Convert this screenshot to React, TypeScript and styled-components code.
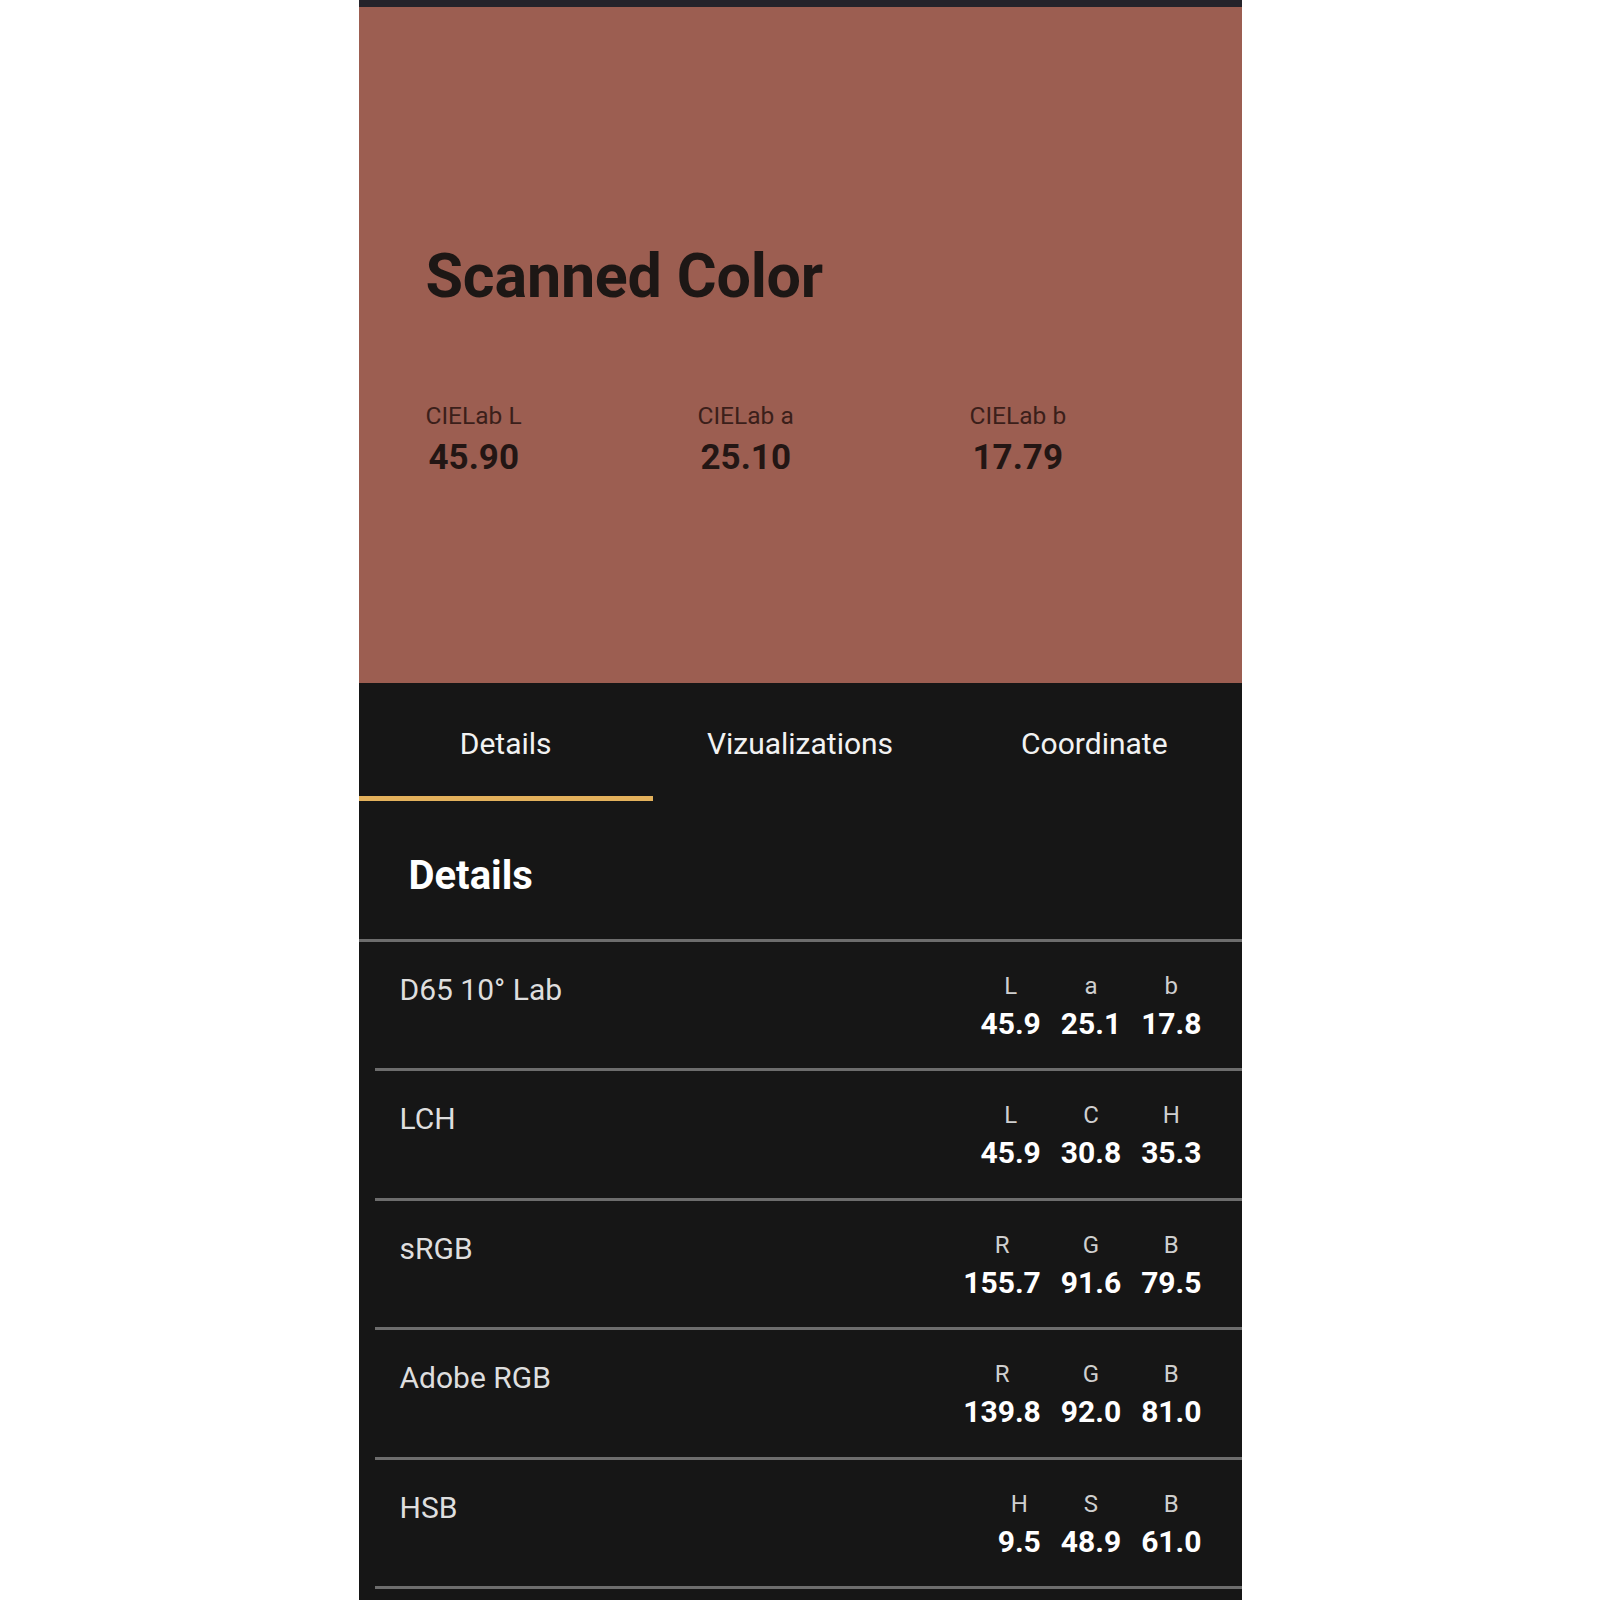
import React from "react";
import styled, { createGlobalStyle } from "styled-components";

const GlobalStyle = createGlobalStyle`
  html, body {
    margin: 0;
    padding: 0;
    background: #ffffff;
  }
  body {
    font-family: Roboto, "Noto Sans", "Liberation Sans", sans-serif;
  }
  * { box-sizing: border-box; }
`;

const Phone = styled.div`
  width: 883px;
  min-height: 1600px;
  margin: 0 auto;
  background: #161616;
  display: flex;
  flex-direction: column;
`;

const StatusBar = styled.div`
  height: 7px;
  background: #25232a;
`;

const Hero = styled.section`
  height: 676px;
  background: #9c5e51;
  padding: 238px 0 0 67px;
  display: flex;
  flex-direction: column;
`;

const Title = styled.h1`
  margin: 0;
  font-size: 61px;
  line-height: 62px;
  font-weight: 700;
  color: #1d1715;
  letter-spacing: -0.2px;
`;

const Stats = styled.div`
  margin-top: 97px;
  display: flex;
`;

const Stat = styled.div`
  flex: 1;
  display: flex;
  flex-direction: column;
`;

const StatLabel = styled.span`
  font-size: 24.5px;
  line-height: 24px;
  font-weight: 400;
  color: #3b1f1a;
`;

const StatValue = styled.span`
  margin-top: 13px;
  margin-left: 3px;
  font-size: 35px;
  line-height: 34px;
  font-weight: 700;
  color: #231614;
`;

const Tabs = styled.nav`
  display: flex;
  height: 118px;
`;

const Tab = styled.div<{ $active?: boolean }>`
  flex: 1;
  padding-top: 46px;
  text-align: center;
  font-size: 30px;
  line-height: 30px;
  font-weight: 400;
  color: #f2f2f2;
  border-bottom: 5px solid ${(p) => (p.$active ? "#e3b15c" : "transparent")};
`;

const SectionHeader = styled.div`
  padding: 55px 0 44px 50px;
  border-bottom: 3px solid #6d6d6d;
`;

const SectionTitle = styled.h2`
  margin: 0;
  font-size: 40px;
  line-height: 39px;
  font-weight: 700;
  color: #ffffff;
`;

const Row = styled.div`
  margin-left: 16px;
  height: 129.4px;
  padding: 32px 40px 0 25px;
  display: flex;
  justify-content: space-between;
  align-items: flex-start;
  border-bottom: 3px solid #6d6d6d;
`;

const RowLabel = styled.span`
  margin-top: 1px;
  font-size: 30px;
  line-height: 30px;
  font-weight: 400;
  color: #dedede;
`;

const Values = styled.div`
  display: flex;
  gap: 20px;
`;

const ValueCol = styled.div`
  display: flex;
  flex-direction: column;
  align-items: center;
`;

const ValueHead = styled.span`
  font-size: 24px;
  line-height: 24px;
  font-weight: 400;
  color: #cfcfcf;
`;

const ValueNum = styled.span`
  margin-top: 11px;
  font-size: 30px;
  line-height: 30px;
  font-weight: 700;
  color: #ffffff;
`;

const stats = [
  { label: "CIELab L", value: "45.90" },
  { label: "CIELab a", value: "25.10" },
  { label: "CIELab b", value: "17.79" },
];

const rows: { name: string; cols: [string, string][] }[] = [
  { name: "D65 10° Lab", cols: [["L", "45.9"], ["a", "25.1"], ["b", "17.8"]] },
  { name: "LCH", cols: [["L", "45.9"], ["C", "30.8"], ["H", "35.3"]] },
  { name: "sRGB", cols: [["R", "155.7"], ["G", "91.6"], ["B", "79.5"]] },
  { name: "Adobe RGB", cols: [["R", "139.8"], ["G", "92.0"], ["B", "81.0"]] },
  { name: "HSB", cols: [["H", "9.5"], ["S", "48.9"], ["B", "61.0"]] },
];

export default function App() {
  return (
    <>
      <GlobalStyle />
      <Phone>
        <StatusBar />
        <Hero>
          <Title>Scanned Color</Title>
          <Stats>
            {stats.map((s) => (
              <Stat key={s.label}>
                <StatLabel>{s.label}</StatLabel>
                <StatValue>{s.value}</StatValue>
              </Stat>
            ))}
          </Stats>
        </Hero>
        <Tabs>
          <Tab $active>Details</Tab>
          <Tab>Vizualizations</Tab>
          <Tab>Coordinate</Tab>
        </Tabs>
        <SectionHeader>
          <SectionTitle>Details</SectionTitle>
        </SectionHeader>
        {rows.map((r) => (
          <Row key={r.name}>
            <RowLabel>{r.name}</RowLabel>
            <Values>
              {r.cols.map(([h, v]) => (
                <ValueCol key={h + v}>
                  <ValueHead>{h}</ValueHead>
                  <ValueNum>{v}</ValueNum>
                </ValueCol>
              ))}
            </Values>
          </Row>
        ))}
      </Phone>
    </>
  );
}
